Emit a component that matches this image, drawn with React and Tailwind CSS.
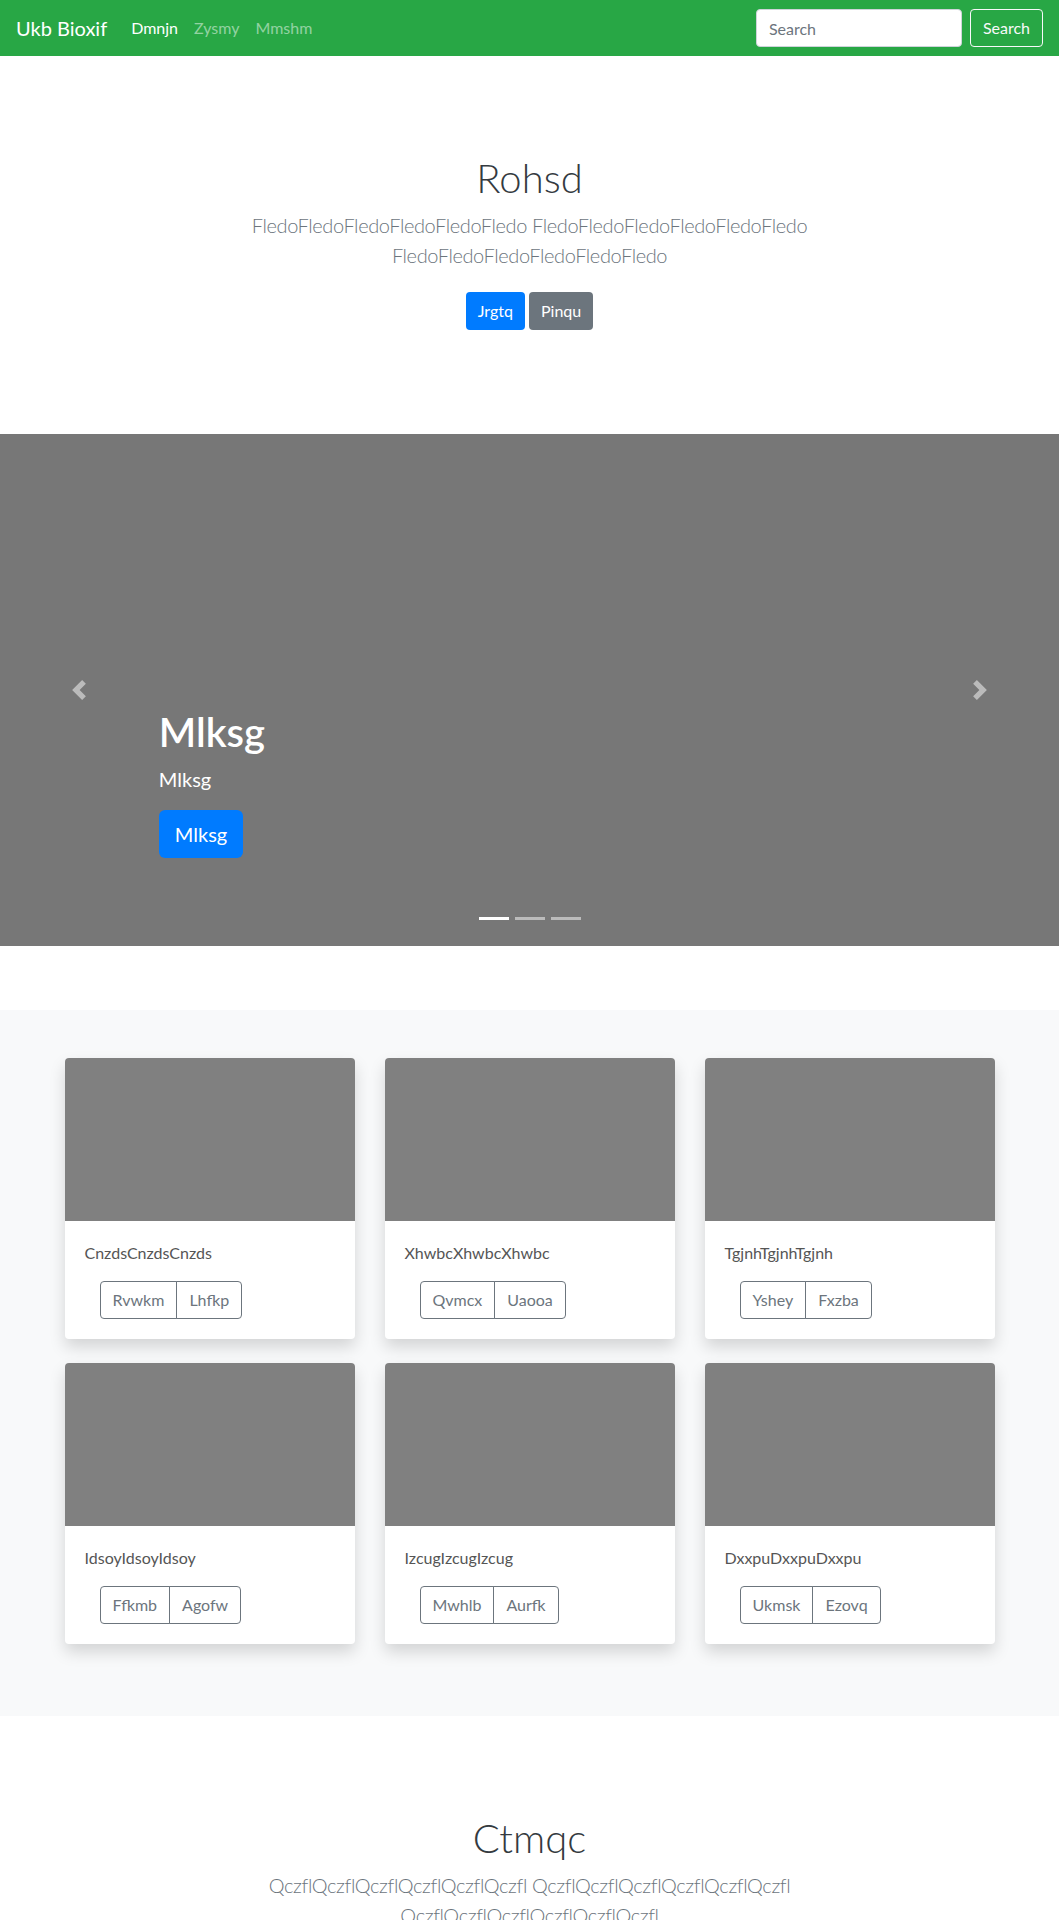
import { useState } from 'react'

const cards = [
  { title: 'CnzdsCnzdsCnzds', a: 'Rvwkm', b: 'Lhfkp' },
  { title: 'XhwbcXhwbcXhwbc', a: 'Qvmcx', b: 'Uaooa' },
  { title: 'TgjnhTgjnhTgjnh', a: 'Yshey', b: 'Fxzba' },
  { title: 'IdsoyIdsoyIdsoy', a: 'Ffkmb', b: 'Agofw' },
  { title: 'IzcugIzcugIzcug', a: 'Mwhlb', b: 'Aurfk' },
  { title: 'DxxpuDxxpuDxxpu', a: 'Ukmsk', b: 'Ezovq' },
]

function Navbar() {
  return (
    <nav className="flex h-14 items-center justify-between bg-[#28a745] px-4">
      <div className="flex items-center">
        <a className="mr-4 text-xl text-white">Ukb Bioxif</a>
        <a className="px-2 text-base text-white">Dmnjn</a>
        <a className="px-2 text-base text-white/50">Zysmy</a>
        <a className="px-2 text-base text-white/50">Mmshm</a>
      </div>
      <form className="flex items-center">
        <input
          placeholder="Search"
          className="h-[38px] w-[206px] rounded border border-[#ced4da] bg-white px-3 text-base text-[#495057] placeholder:text-[#6c757d] outline-none"
        />
        <button
          type="button"
          className="ml-2 h-[38px] rounded border border-[#f8f9fa] px-3 text-base text-[#f8f9fa]"
        >
          Search
        </button>
      </form>
    </nav>
  )
}

function Hero({ title, word, buttons = true }) {
  const line = word.repeat(6)
  return (
    <section className="pb-[104px] pt-[98px] text-center">
      <h1 className="text-[40px] font-light leading-[48px] text-[#343a40]">{title}</h1>
      <p className="mt-2 text-xl font-light leading-[30px] tracking-[-0.4px] text-[#6c757d]">
        {line} {line}
        <br />
        {line}
      </p>
      {buttons && (
        <div className="mt-[22px] flex justify-center gap-1">
          <button className="h-[38px] rounded bg-[#007bff] px-3 text-base text-white">Jrgtq</button>
          <button className="h-[38px] rounded bg-[#6c757d] px-3 text-base text-white">Pinqu</button>
        </div>
      )}
    </section>
  )
}

function Carousel() {
  const [active, setActive] = useState(0)
  return (
    <div className="relative mb-16 h-[512px] bg-[#777777]">
      <button
        onClick={() => setActive((active + 2) % 3)}
        className="absolute left-0 top-0 flex h-full w-[15%] items-center justify-center"
      >
        <svg width="20" height="20" viewBox="0 0 8 8" className="opacity-50">
          <path fill="#fff" d="M5.25 0l-4 4 4 4 1.5-1.5L4.25 4l2.5-2.5L5.25 0z" />
        </svg>
      </button>
      <button
        onClick={() => setActive((active + 1) % 3)}
        className="absolute right-0 top-0 flex h-full w-[15%] items-center justify-center"
      >
        <svg width="20" height="20" viewBox="0 0 8 8" className="opacity-50">
          <path fill="#fff" d="M2.75 0l-1.5 1.5L3.75 4l-2.5 2.5L2.75 8l4-4-4-4z" />
        </svg>
      </button>
      <div className="absolute bottom-[88px] left-[15%] text-left text-white">
        <h1 className="text-[40px] font-semibold leading-[48px]">Mlksg</h1>
        <p className="mt-2 text-xl leading-[30px]">Mlksg</p>
        <button className="mt-4 h-12 rounded-md bg-[#007bff] px-4 text-xl text-white">Mlksg</button>
      </div>
      <div className="absolute bottom-[26px] left-0 right-0 flex justify-center gap-1.5">
        {[0, 1, 2].map((i) => (
          <span
            key={i}
            onClick={() => setActive(i)}
            className={i === active ? 'h-[3px] w-[30px] bg-white' : 'h-[3px] w-[30px] bg-white/50'}
          />
        ))}
      </div>
    </div>
  )
}

function Card({ title, a, b }) {
  return (
    <div className="overflow-hidden rounded bg-white shadow-[0_8px_16px_rgba(0,0,0,0.15)]">
      <div className="h-[163px] bg-[#808080]" />
      <div className="p-5">
        <p className="mb-4 text-base leading-6 text-[#555555]">{title}</p>
        <div className="ml-[15px] inline-flex">
          <button className="h-[38px] rounded-l border border-[#6c757d] px-3 text-base text-[#6c757d]">{a}</button>
          <button className="-ml-px h-[38px] rounded-r border border-[#6c757d] px-3 text-base text-[#6c757d]">{b}</button>
        </div>
      </div>
    </div>
  )
}

export default function App() {
  return (
    <div className="min-h-screen bg-white font-['Lato','Noto_Sans',sans-serif]">
      <Navbar />
      <Hero title="Rohsd" word="Fledo" />
      <Carousel />
      <section className="bg-[#f8f9fa] py-12">
        <div className="mx-auto grid w-[930px] grid-cols-3 gap-x-[30px] gap-y-6 pb-6">
          {cards.map((c) => (
            <Card key={c.title} {...c} />
          ))}
        </div>
      </section>
      <Hero title="Ctmqc" word="Qczfl" />
    </div>
  )
}
